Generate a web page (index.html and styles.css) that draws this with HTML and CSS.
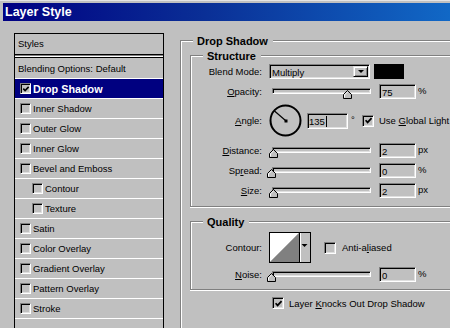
FILE: index.html
```html
<!DOCTYPE html>
<html>
<head>
<meta charset="utf-8">
<title>Layer Style</title>
<link rel="stylesheet" href="styles.css">
</head>
<body>
<div class="window">
  <div class="titlebar">Layer Style</div>
  <div class="content">
    <div class="panel">
      <div class="panel-head">Styles</div>
      <div class="head-divider"></div>
      <div class="row plain">Blending Options: Default</div>
      <div class="row selected"><span class="cb small"><svg class="check" width="9" height="9" viewBox="0 0 9 9"><path d="M1.5 3.5 L3.5 5.8 L7.5 1.5" fill="none" stroke="#000" stroke-width="1.8"/></svg></span>Drop Shadow</div>
      <div class="row"><span class="cb small"></span>Inner Shadow</div>
      <div class="row"><span class="cb small"></span>Outer Glow</div>
      <div class="row"><span class="cb small"></span>Inner Glow</div>
      <div class="row"><span class="cb small"></span>Bevel and Emboss</div>
      <div class="row sub"><span class="cb small"></span>Contour</div>
      <div class="row sub"><span class="cb small"></span>Texture</div>
      <div class="row"><span class="cb small"></span>Satin</div>
      <div class="row"><span class="cb small"></span>Color Overlay</div>
      <div class="row"><span class="cb small"></span>Gradient Overlay</div>
      <div class="row"><span class="cb small"></span>Pattern Overlay</div>
      <div class="row"><span class="cb small"></span>Stroke</div>
      <div class="row last"></div>
    </div>

    <div class="settings">
      <div class="group outer">
        <div class="group-title">Drop Shadow</div>

        <div class="group structure">
          <div class="group-title">Structure</div>

          <div class="srow first">
            <span class="lbl">Blend Mode:</span>
            <div class="select">
              <span class="select-text">Multiply</span>
              <span class="drop-btn"><span class="arrow"></span></span>
            </div>
            <span class="swatch"></span>
          </div>

          <div class="srow">
            <span class="lbl"><u>O</u>pacity:</span>
            <div class="slider"><div class="track"></div><span class="thumb" style="left:74px"><svg width="9" height="9" viewBox="0 0 9 9"><path d="M0.5 8.5V4.5L4.5 0.5L8.5 4.5V8.5Z" fill="#c0c0c0" stroke="#000"/><path d="M1.5 7.5V4.9L4.5 1.9" fill="none" stroke="#fff"/></svg></span></div>
            <span class="num">75</span>
            <span class="unit">%</span>
          </div>

          <div class="srow angle">
            <span class="lbl"><u>A</u>ngle:</span>
            <svg class="dial" width="33" height="33" viewBox="0 0 33 33"><circle cx="16.5" cy="16.5" r="15" fill="none" stroke="#000" stroke-width="2"/><line x1="16.5" y1="16.5" x2="5.5" y2="7" stroke="#000" stroke-width="1.2"/><rect x="15.5" y="15.5" width="3" height="3" fill="#000"/></svg>
            <span class="num angle-num"><span class="caret">135</span></span>
            <span class="deg">°</span>
            <span class="cb big"><svg class="check" width="10" height="10" viewBox="0 0 10 10"><path d="M1.8 4.2 L4 6.6 L8.4 1.8" fill="none" stroke="#000" stroke-width="1.9"/></svg></span>
            <span class="cb-text">Use <u>G</u>lobal Light</span>
          </div>

          <div class="srow gap6">
            <span class="lbl"><u>D</u>istance:</span>
            <div class="slider"><div class="track"></div><span class="thumb" style="left:0px"><svg width="9" height="9" viewBox="0 0 9 9"><path d="M0.5 8.5V4.5L4.5 0.5L8.5 4.5V8.5Z" fill="#c0c0c0" stroke="#000"/><path d="M1.5 7.5V4.9L4.5 1.9" fill="none" stroke="#fff"/></svg></span></div>
            <span class="num">2</span>
            <span class="unit">px</span>
          </div>

          <div class="srow">
            <span class="lbl">Sp<u>r</u>ead:</span>
            <div class="slider"><div class="track"></div><span class="thumb" style="left:-2px"><svg width="9" height="9" viewBox="0 0 9 9"><path d="M0.5 8.5V4.5L4.5 0.5L8.5 4.5V8.5Z" fill="#c0c0c0" stroke="#000"/><path d="M1.5 7.5V4.9L4.5 1.9" fill="none" stroke="#fff"/></svg></span></div>
            <span class="num">0</span>
            <span class="unit">%</span>
          </div>

          <div class="srow">
            <span class="lbl"><u>S</u>ize:</span>
            <div class="slider"><div class="track"></div><span class="thumb" style="left:0px"><svg width="9" height="9" viewBox="0 0 9 9"><path d="M0.5 8.5V4.5L4.5 0.5L8.5 4.5V8.5Z" fill="#c0c0c0" stroke="#000"/><path d="M1.5 7.5V4.9L4.5 1.9" fill="none" stroke="#fff"/></svg></span></div>
            <span class="num">2</span>
            <span class="unit">px</span>
          </div>
        </div>

        <div class="group quality">
          <div class="group-title">Quality</div>

          <div class="srow contour-row">
            <span class="lbl">Contour:</span>
            <svg class="contour" width="42" height="31" viewBox="0 0 42 31"><rect x="0.5" y="0.5" width="41" height="30" fill="#c0c0c0" stroke="#000"/><polygon points="1,1 30,1 1,30" fill="#fff"/><polygon points="30,1 30,30 1,30" fill="#808080"/><line x1="30.5" y1="1" x2="30.5" y2="30" stroke="#000"/><line x1="31.5" y1="1" x2="31.5" y2="30" stroke="#fff"/><polygon points="32.5,12 38.5,12 35.5,15" fill="#000"/></svg>
            <span class="cb big aa"></span>
            <span class="cb-text aa-text">Anti-a<u>l</u>iased</span>
          </div>

          <div class="srow noise-row">
            <span class="lbl"><u>N</u>oise:</span>
            <div class="slider"><div class="track"></div><span class="thumb" style="left:-2px"><svg width="9" height="9" viewBox="0 0 9 9"><path d="M0.5 8.5V4.5L4.5 0.5L8.5 4.5V8.5Z" fill="#c0c0c0" stroke="#000"/><path d="M1.5 7.5V4.9L4.5 1.9" fill="none" stroke="#fff"/></svg></span></div>
            <span class="num">0</span>
            <span class="unit">%</span>
          </div>
        </div>

        <div class="knock">
          <span class="cb big"><svg class="check" width="10" height="10" viewBox="0 0 10 10"><path d="M1.8 4.2 L4 6.6 L8.4 1.8" fill="none" stroke="#000" stroke-width="1.9"/></svg></span>
          <span class="cb-text">Layer <u>K</u>nocks Out Drop Shadow</span>
        </div>
      </div>
    </div>
  </div>
</div>
</body>
</html>
```

FILE: styles.css
```css
* {
  box-sizing: border-box;
}

html,
body {
  margin: 0;
  padding: 0;
  width: 450px;
  height: 328px;
  overflow: hidden;
  background: #c0c0c0;
}

body {
  font-family: "Liberation Sans", Arial, sans-serif;
  font-size: 9.5px;
  color: #000;
}

.window {
  border-top: 1px solid #e4e4e4;
  padding-top: 2px;
  height: 328px;
  overflow: hidden;
}

.titlebar {
  margin-left: 3px;
  height: 18px;
  padding-left: 2px;
  background: linear-gradient(90deg, #000082 0%, #0a2f96 45%, #1168c6 100%);
  color: #fff;
  font-weight: bold;
  font-size: 12.5px;
  line-height: 19px;
  white-space: nowrap;
}

.content {
  display: flex;
  align-items: flex-start;
  padding: 12px 0 0 14px;
}

/* ---------- left styles list ---------- */
.panel {
  flex: none;
  width: 150px;
  height: 295px;
  border: 1px solid #000;
  border-bottom: none;
}

.panel-head {
  height: 21px;
  padding-left: 3px;
  line-height: 20px;
  border-bottom: 1px solid #000;
}

.head-divider {
  height: 4px;
  background: linear-gradient(#808080 0 1px, #fff 1px 2px, #000 2px 3px, #c0c0c0 3px 4px);
}

.row {
  height: 20px;
  display: flex;
  align-items: center;
  padding-left: 5px;
  border-bottom: 1px solid #fff;
  white-space: nowrap;
}

.row.last {
  height: 10px;
  border-bottom: none;
}

.row.plain {
  padding-left: 3px;
}

.row.sub {
  padding-left: 17px;
}

.row.selected {
  background: #000080;
  color: #fff;
  font-weight: bold;
  font-size: 10.8px;
}

/* ---------- checkboxes ---------- */
.cb {
  flex: none;
  display: flex;
  align-items: center;
  justify-content: center;
  border: 1px solid;
  border-color: #808080 #fff #fff #808080;
  box-shadow: inset 1px 1px 0 #000, inset -1px -1px 0 #dfdfdf;
  background: #c0c0c0;
}

.cb.small {
  width: 11px;
  height: 11px;
  margin-right: 2px;
}

.cb.big {
  width: 12px;
  height: 12px;
}

.check {
  display: block;
  margin: 1px 0 0 1px;
}

.cb-text {
  margin-left: 5px;
  white-space: nowrap;
}

/* ---------- right settings ---------- */
.settings {
  flex: none;
  width: 270px;
  margin-left: 16px;
}

.group {
  border: 1px solid #808080;
  box-shadow: inset 1px 1px 0 #fff, 1px 1px 0 #fff;
}

.group-title {
  width: max-content;
  margin: -6px 0 0 12px;
  padding: 0 5px 0 4px;
  background: #c0c0c0;
  font-weight: bold;
  font-size: 11px;
  line-height: 13px;
  white-space: nowrap;
}

.outer {
  margin-top: 7px;
  height: 288px;
  border-right: none;
  border-bottom: none;
  box-shadow: inset 1px 1px 0 #fff;
}

.structure {
  margin: 7px 0 0 9px;
  padding-bottom: 8px;
  border-right: none;
  box-shadow: inset 1px 1px 0 #fff, 0 1px 0 #fff;
}

.quality {
  margin: 14px 0 0 9px;
  padding-bottom: 7px;
  border-right: none;
  box-shadow: inset 1px 1px 0 #fff, 0 1px 0 #fff;
}

.srow {
  display: flex;
  align-items: center;
  height: 15px;
  margin-top: 5px;
  white-space: nowrap;
}

.srow.first {
  margin-top: 1px;
}

.srow.gap6 {
  margin-top: 6px;
}

.srow.angle {
  height: 33px;
}

.srow.contour-row {
  height: 31px;
  margin-top: 3px;
}

.srow.noise-row {
  margin-top: 4px;
}

.lbl {
  flex: none;
  width: 71px;
  margin-right: 7px;
  text-align: right;
}

/* select */
.select {
  flex: none;
  display: flex;
  align-items: center;
  width: 101px;
  height: 15px;
  border: 1px solid;
  border-color: #808080 #fff #fff #808080;
  box-shadow: inset 1px 1px 0 #000, inset -1px -1px 0 #dfdfdf;
  padding: 1px 1px 1px 2px;
}

.select-text {
  flex: 1;
  padding-top: 1px;
}

.drop-btn {
  flex: none;
  width: 15px;
  height: 11px;
  display: flex;
  align-items: center;
  justify-content: center;
  border: 1px solid;
  border-color: #dfdfdf #000 #000 #dfdfdf;
  box-shadow: inset 1px 1px 0 #fff, inset -1px -1px 0 #808080;
}

.arrow {
  width: 0;
  height: 0;
  border-left: 3px solid transparent;
  border-right: 3px solid transparent;
  border-top: 3px solid #000;
}

.swatch {
  flex: none;
  width: 30px;
  height: 15px;
  margin-left: 4px;
  background: #000;
}

/* slider */
.slider {
  position: relative;
  flex: none;
  width: 104px;
  height: 15px;
  padding-top: 4px;
}

.track {
  margin-left: 3px;
  width: 99px;
  height: 6px;
  border: 1px solid;
  border-color: #808080 #fff #fff #808080;
  box-shadow: inset 1px 1px 0 #000, inset -1px -1px 0 #dfdfdf;
}

.thumb {
  position: absolute;
  top: 6px;
  width: 9px;
  height: 9px;
}

.thumb svg {
  display: block;
}

/* number fields */
.num {
  flex: none;
  width: 37px;
  height: 15px;
  margin-left: 6px;
  padding: 2px 0 0 2px;
  line-height: 11px;
  border: 1px solid;
  border-color: #808080 #fff #fff #808080;
  box-shadow: inset 1px 1px 0 #000, inset -1px -1px 0 #dfdfdf;
}

.unit {
  margin-left: 2px;
  margin-top: -2px;
}

/* angle row */
.dial {
  flex: none;
  display: block;
}

.num.angle-num {
  width: 41px;
  height: 16px;
  margin-left: 5px;
  margin-top: 1px;
  padding-left: 1px;
}

.caret {
  border-right: 1px solid #000;
  padding-right: 1px;
}

.deg {
  flex: none;
  width: 11px;
  margin-left: 3px;
  align-self: flex-start;
  margin-top: 10px;
}

/* quality */
.contour {
  flex: none;
  display: block;
}

.cb.aa {
  margin-left: 13px;
}

.aa-text {
  margin-left: 6px;
}

.knock {
  display: flex;
  align-items: center;
  height: 12px;
  margin-top: 7px;
  padding-left: 91px;
}
```
